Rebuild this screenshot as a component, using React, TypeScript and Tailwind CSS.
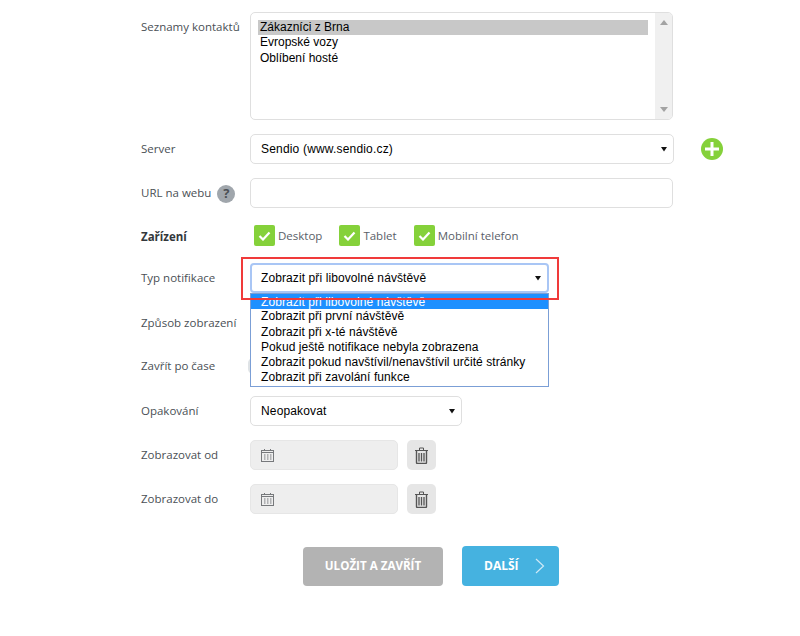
import React from "react";

const labelCls = "w-[109px] shrink-0 text-[11.5px] text-[#4a4f55] font-['Open_Sans',sans-serif]";
const fieldCls = "rounded-[5px] border border-[#dfdfdf] bg-white font-['Liberation_Sans',sans-serif] text-[12px] text-black";

const options = [
  "Zobrazit při libovolné návštěvě",
  "Zobrazit při první návštěvě",
  "Zobrazit při x-té návštěvě",
  "Pokud ještě notifikace nebyla zobrazena",
  "Zobrazit pokud navštívil/nenavštívil určité stránky",
  "Zobrazit při zavolání funkce",
];

function Caret() {
  return (
    <svg width="6" height="6" viewBox="0 0 6 6" className="shrink-0">
      <path d="M0 1h6L3 5.5z" fill="#111" />
    </svg>
  );
}

function Check({ label, className }: { label: string; className: string }) {
  return (
    <div className={"flex items-center " + className}>
      <div className="flex h-[21px] w-[21px] items-center justify-center rounded-[2px] bg-[#85d13a]">
        <svg width="13" height="10" viewBox="0 0 13 10" fill="none">
          <path d="M1.5 5l3.5 3.5L11.5 1.5" stroke="#fff" strokeWidth="2.2" />
        </svg>
      </div>
      <span className="ml-[3px] font-['Open_Sans',sans-serif] text-[11.5px] text-[#5a6068]">{label}</span>
    </div>
  );
}

function DateRow({ label, className }: { label: string; className: string }) {
  return (
    <div className={"flex items-center " + className}>
      <div className={labelCls}>{label}</div>
      <div className="flex h-[30px] w-[148px] items-center rounded-[5px] border border-[#e6e6e6] bg-[#eeeeee] pl-[10px]">
        <svg width="13" height="13" viewBox="0 0 13 13" fill="none" stroke="#77797c">
          <rect x="0.5" y="1.5" width="12" height="11" />
          <path d="M0.5 3.5h12M3.5 0v2M9.5 0v2" />
          <path d="M3 6h1.5M6 6h1.5M9 6h1.5M3 8h1.5M6 8h1.5M9 8h1.5M3 10h1.5M6 10h1.5M9 10h1.5" />
        </svg>
      </div>
      <div className="ml-[9px] flex h-[30px] w-[29px] items-center justify-center rounded-[5px] bg-[#e6e6e6]">
        <svg width="13" height="17" viewBox="0 0 13 17" fill="none" stroke="#555" strokeWidth="1">
          <path d="M0 3.5h13M4.5 3V1h4v2" />
          <path d="M1.5 4v11.5a1 1 0 0 0 1 1h8a1 1 0 0 0 1-1V4" strokeWidth="1.4" />
          <path d="M4 6v8.5M6.5 6v8.5M9 6v8.5" strokeWidth="1.3" />
        </svg>
      </div>
    </div>
  );
}

export default function App() {
  return (
    <div className="relative h-[636px] w-[800px] overflow-hidden bg-white pl-[141px] pt-[12px]">
      {/* contact lists */}
      <div className="flex items-start">
        <div className={labelCls + " pt-[6px]"}>Seznamy kontaktů</div>
        <div className={fieldCls + " flex h-[108px] w-[423px] overflow-hidden"}>
          <div className="flex-1 pl-[7px] pr-[7px] pt-[7px]">
            <div className="h-[15px] bg-[#c8c8c8] px-[2px] leading-[15px]">Zákazníci z Brna</div>
            <div className="h-[15px] px-[2px] leading-[15px]">Evropské vozy</div>
            <div className="h-[16px] px-[2px] leading-[17px]">Oblíbení hosté</div>
          </div>
          <div className="flex w-[17px] flex-col items-center justify-between bg-[#f0f0f0] py-[7px]">
            <svg width="8" height="5" viewBox="0 0 8 5"><path d="M0 5L4 0l4 5z" fill="#a3a3a3" /></svg>
            <svg width="8" height="5" viewBox="0 0 8 5"><path d="M0 0l4 5 4-5z" fill="#a3a3a3" /></svg>
          </div>
        </div>
      </div>

      {/* server */}
      <div className="mt-[14px] flex items-center">
        <div className={labelCls}>Server</div>
        <div className={fieldCls + " flex h-[30px] w-[424px] items-center justify-between pl-[10px] pr-[6px] tracking-[0.18px]"}>
          <span>Sendio (www.sendio.cz)</span>
          <Caret />
        </div>
        <div className="ml-[27px] flex h-[22px] w-[22px] items-center justify-center rounded-full bg-[#85d13a]">
          <svg width="14" height="14" viewBox="0 0 14 14"><path d="M7 0v14M0 7h14" stroke="#fff" strokeWidth="3" /></svg>
        </div>
      </div>

      {/* url */}
      <div className="mt-[14px] flex items-center">
        <div className={labelCls + " flex items-center"}>
          <span>URL na webu</span>
          <span className="ml-[6px] mt-[2px] flex h-[18px] w-[18px] items-center justify-center rounded-full bg-[#a0a6ac] text-[13px] font-bold text-[#4a4f55]">?</span>
        </div>
        <div className={fieldCls + " h-[30px] w-[423px]"} />
      </div>

      {/* devices */}
      <div className="mt-[17px] flex items-center">
        <div className={labelCls + " pt-[2px] font-bold text-[#33373b]"}>Zařízení</div>
        <Check label="Desktop" className="ml-[4px]" />
        <Check label="Tablet" className="ml-[17px]" />
        <Check label="Mobilní telefon" className="ml-[17px]" />
      </div>

      {/* notification type */}
      <div className="mt-[17px] flex items-center">
        <div className={labelCls}>Typ notifikace</div>
        <div className="flex h-[30px] w-[299px] items-center justify-between rounded-[4px] border-2 border-[#a9c6f5] bg-white pl-[9px] pr-[6px] font-['Liberation_Sans',sans-serif] text-[12px] tracking-[0.1px] text-black">
          <span>Zobrazit při libovolné návštěvě</span>
          <Caret />
        </div>
      </div>

      <div className="mt-[15px] flex h-[30px] items-center">
        <div className={labelCls}>Způsob zobrazení</div>
      </div>

      <div className="mt-[13px] flex h-[30px] items-center">
        <div className={labelCls}>Zavřít po čase</div>
        <div className="-ml-[2px] h-[16px] w-[10px] rounded-full bg-[#dfe3e6]" />
      </div>

      {/* repeat */}
      <div className="mt-[15px] flex items-center">
        <div className={labelCls}>Opakování</div>
        <div className={fieldCls + " flex h-[30px] w-[212px] items-center justify-between pl-[10px] pr-[6px] tracking-[0.15px]"}>
          <span>Neopakovat</span>
          <Caret />
        </div>
      </div>

      <DateRow label="Zobrazovat od" className="mt-[14px]" />
      <DateRow label="Zobrazovat do" className="mt-[14px]" />

      {/* actions */}
      <div className="ml-[162px] mt-[32px] flex items-center font-['Open_Sans',sans-serif] font-bold text-white">
        <button className="h-[39px] w-[140px] rounded-[4px] bg-[#b3b3b3] text-[11.6px]">ULOŽIT A ZAVŘÍT</button>
        <button className="ml-[19px] flex h-[40px] w-[97px] items-center rounded-[4px] bg-[#45b2e0] pl-[22px] text-[12px]">
          <span>DALŠÍ</span>
          <svg width="10" height="16" viewBox="0 0 10 16" fill="none" className="ml-[16px]">
            <path d="M1 1l7.5 7L1 15" stroke="#cfe9f6" strokeWidth="1.2" />
          </svg>
        </button>
      </div>

      {/* open dropdown and highlight */}
      <div className="absolute left-[250px] top-[293px] h-[94px] w-[299px] border border-[#7b9fd6] bg-white font-['Liberation_Sans',sans-serif] text-[12px] leading-[15px] tracking-[0.07px] text-black">
        {options.map((o, i) => (
          <div
            key={o}
            className={i === 0 ? "h-[15px] bg-[#1e90ff] pl-[10px] pt-[1px] text-white" : i === 1 ? "h-[16px] pl-[10px]" : "h-[15px] pl-[10px]"}
          >
            {o}
          </div>
        ))}
      </div>
      <div className="absolute left-[241px] top-[257px] h-[43px] w-[318px] border-2 border-[#f03a3a]" />
    </div>
  );
}
